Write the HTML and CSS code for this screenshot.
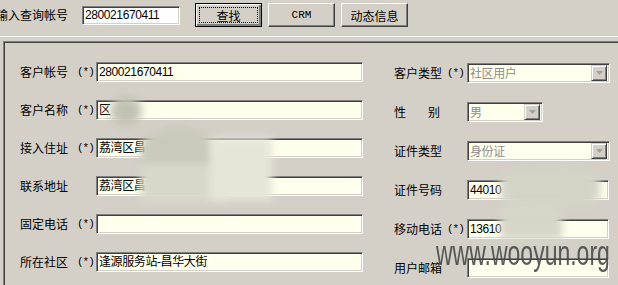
FILE: index.html
```html
<!DOCTYPE html>
<html lang="zh-CN">
<head>
    <meta charset="UTF-8">
    <title>客户资料查询</title>
    <link rel="stylesheet" href="styles.css">
</head>
<body>
    <div class="toolbar">
        <span class="query-label">输入查询帐号</span>
        <span class="field plain query-input">280021670411</span>
        <button class="btn default"><span class="focus">查找</span></button>
        <button class="btn latin">CRM</button>
        <button class="btn">动态信息</button>
    </div>
    <div class="rule"></div>

    <div class="panel">
        <div class="col left">
            <div class="row"><span class="label">客户帐号</span><span class="req">(*)</span><span class="field wide">280021670411</span></div>
            <div class="row"><span class="label">客户名称</span><span class="req">(*)</span><span class="field wide">区</span></div>
            <div class="row"><span class="label">接入住址</span><span class="req">(*)</span><span class="field wide">荔湾区昌</span></div>
            <div class="row"><span class="label">联系地址</span><span class="req"></span><span class="field wide">荔湾区昌</span></div>
            <div class="row"><span class="label">固定电话</span><span class="req">(*)</span><span class="field wide"></span></div>
            <div class="row"><span class="label">所在社区</span><span class="req">(*)</span><span class="field wide">逢源服务站-昌华大街</span></div>
        </div>

        <div class="col right">
            <div class="row">
                <span class="label">客户类型</span><span class="req">(*)</span>
                <span class="field combo"><span class="combo-text">社区用户</span><span class="drop"><svg width="7" height="4" viewBox="0 0 7 4"><path d="M0 0h7L3.5 4z" fill="#a0a0a0"/></svg></span></span>
            </div>
            <div class="row">
                <span class="label spaced">性<span class="gap-char"></span>别</span><span class="req"></span>
                <span class="field combo short"><span class="combo-text">男</span><span class="drop"><svg width="7" height="4" viewBox="0 0 7 4"><path d="M0 0h7L3.5 4z" fill="#a0a0a0"/></svg></span></span>
            </div>
            <div class="row">
                <span class="label">证件类型</span><span class="req"></span>
                <span class="field combo"><span class="combo-text">身份证</span><span class="drop"><svg width="7" height="4" viewBox="0 0 7 4"><path d="M0 0h7L3.5 4z" fill="#a0a0a0"/></svg></span></span>
            </div>
            <div class="row"><span class="label">证件号码</span><span class="req"></span><span class="field side">44010</span></div>
            <div class="row"><span class="label">移动电话</span><span class="req">(*)</span><span class="field side">13610</span></div>
            <div class="row"><span class="label">用户邮箱</span><span class="req"></span><span class="field side"></span></div>
        </div>
    </div>

    <!-- privacy blur over the screenshot -->
    <div class="blob b1"></div>
    <div class="blob b2"></div>
    <div class="blob b3"></div>
    <div class="blob b4"></div>
    <div class="blob b5"></div>
    <div class="blob b6"></div>

    <div class="watermark">www.wooyun.org</div>
</body>
</html>
```

FILE: styles.css
```css
* {
    margin: 0;
    padding: 0;
    box-sizing: border-box;
}

body {
    width: 618px;
    height: 285px;
    overflow: hidden;
    background: #d4d0c8;
    color: #000;
    font-family: "Noto Sans CJK SC", "Liberation Sans", sans-serif;
    font-size: 12px;
    line-height: 1;
    position: relative;
}

.toolbar {
    display: flex;
    align-items: center;
    height: 36px;
    padding-bottom: 6px;
}

.query-label {
    margin-left: -4px;
    width: 86px;
}

.field {
    display: flex;
    align-items: center;
    height: 20px;
    padding-left: 2px;
    background: #ffffee;
    border-top: 1px solid #808080;
    border-left: 1px solid #808080;
    border-bottom: 1px solid #ffffff;
    border-right: 1px solid #ffffff;
    box-shadow: inset 1px 1px 0 #404040, inset -1px -1px 0 #d4d0c8;
    font-family: "Liberation Sans", "Noto Sans CJK SC", sans-serif;
    letter-spacing: -0.4px;
    white-space: nowrap;
    overflow: hidden;
}

.field.plain {
    background: #ffffff;
}

.query-input {
    width: 98px;
    height: 19px;
    margin-right: 15px;
}

.btn {
    width: 67px;
    height: 24px;
    margin-right: 6px;
    background: #d4d0c8;
    border-top: 1px solid #ffffff;
    border-left: 1px solid #ffffff;
    border-bottom: 1px solid #404040;
    border-right: 1px solid #404040;
    box-shadow: inset -1px -1px 0 #808080;
    font-family: "Noto Sans CJK SC", sans-serif;
    font-size: 12px;
    color: #000;
    display: flex;
    align-items: center;
    justify-content: center;
}

.btn.latin {
    font-family: "Liberation Mono", monospace;
    font-size: 11px;
}

.btn.default {
    border: 1px solid #000;
    box-shadow: inset 1px 1px 0 #ffffff, inset -2px -2px 0 #808080;
    padding: 3px;
}

.focus {
    display: flex;
    align-items: center;
    justify-content: center;
    width: 100%;
    height: 100%;
    border: 1px dotted #000;
}

.rule {
    height: 1px;
    background: #ffffff;
    margin-bottom: 4px;
}

.panel {
    display: flex;
    margin-left: 3px;
    height: 250px;
    padding: 20px 0 0 16px;
    border-top: 1px solid #808080;
    border-left: 1px solid #808080;
    box-shadow: inset 1px 1px 0 #404040;
}

.col {
    display: flex;
    flex-direction: column;
}

.col.left {
    gap: 18px;
    width: 344px;
}

.col.right {
    gap: 19px;
    margin-top: 1px;
    margin-left: 30px;
}

.row {
    display: flex;
    align-items: center;
    height: 20px;
}

.left .label {
    width: 57px;
}

.left .req {
    width: 19px;
}

.right .label {
    width: 53px;
}

.right .req {
    width: 20px;
}

.req {
    font-family: "Liberation Mono", monospace;
    font-size: 11px;
    letter-spacing: -1px;
}

.gap-char {
    display: inline-block;
    width: 22px;
}

.wide {
    width: 267px;
}

.side {
    width: 142px;
}

.combo {
    width: 143px;
    justify-content: space-between;
    padding-right: 2px;
}

.combo.short {
    width: 76px;
}

.combo-text {
    color: #8c8c8c;
    font-family: "Noto Sans CJK SC", sans-serif;
}

.drop {
    display: flex;
    align-items: center;
    justify-content: center;
    width: 16px;
    height: 16px;
    background: #d4d0c8;
    border-top: 1px solid #d4d0c8;
    border-left: 1px solid #d4d0c8;
    border-bottom: 1px solid #404040;
    border-right: 1px solid #404040;
    box-shadow: inset 1px 1px 0 #ffffff, inset -1px -1px 0 #808080;
}

.blob {
    position: absolute;
    filter: blur(4px);
}

.b1 {
    left: 110px;
    top: 96px;
    width: 32px;
    height: 30px;
    border-radius: 50%;
    background: #c2c2b4;
}

.b2 {
    left: 140px;
    top: 126px;
    width: 76px;
    height: 44px;
    border-radius: 50% 50% 10px 10px;
    background: #cacabc;
}

.b3 {
    left: 140px;
    top: 164px;
    width: 88px;
    height: 38px;
    background: #d8d8ca;
}

.b4 {
    left: 210px;
    top: 138px;
    width: 62px;
    height: 62px;
    background: #e6e6d8;
}

.b5 {
    left: 500px;
    top: 168px;
    width: 100px;
    height: 40px;
    border-radius: 30%;
    background: #d4d4c6;
}

.b6 {
    left: 500px;
    top: 206px;
    width: 62px;
    height: 34px;
    background: #d6d6c8;
}

.watermark {
    position: absolute;
    left: 436px;
    top: 236px;
    font-family: "Liberation Sans", sans-serif;
    font-size: 23px;
    color: #4a4a4a;
    opacity: 0.9;
    transform: scaleY(1.5);
    transform-origin: left top;
    white-space: nowrap;
}
```
